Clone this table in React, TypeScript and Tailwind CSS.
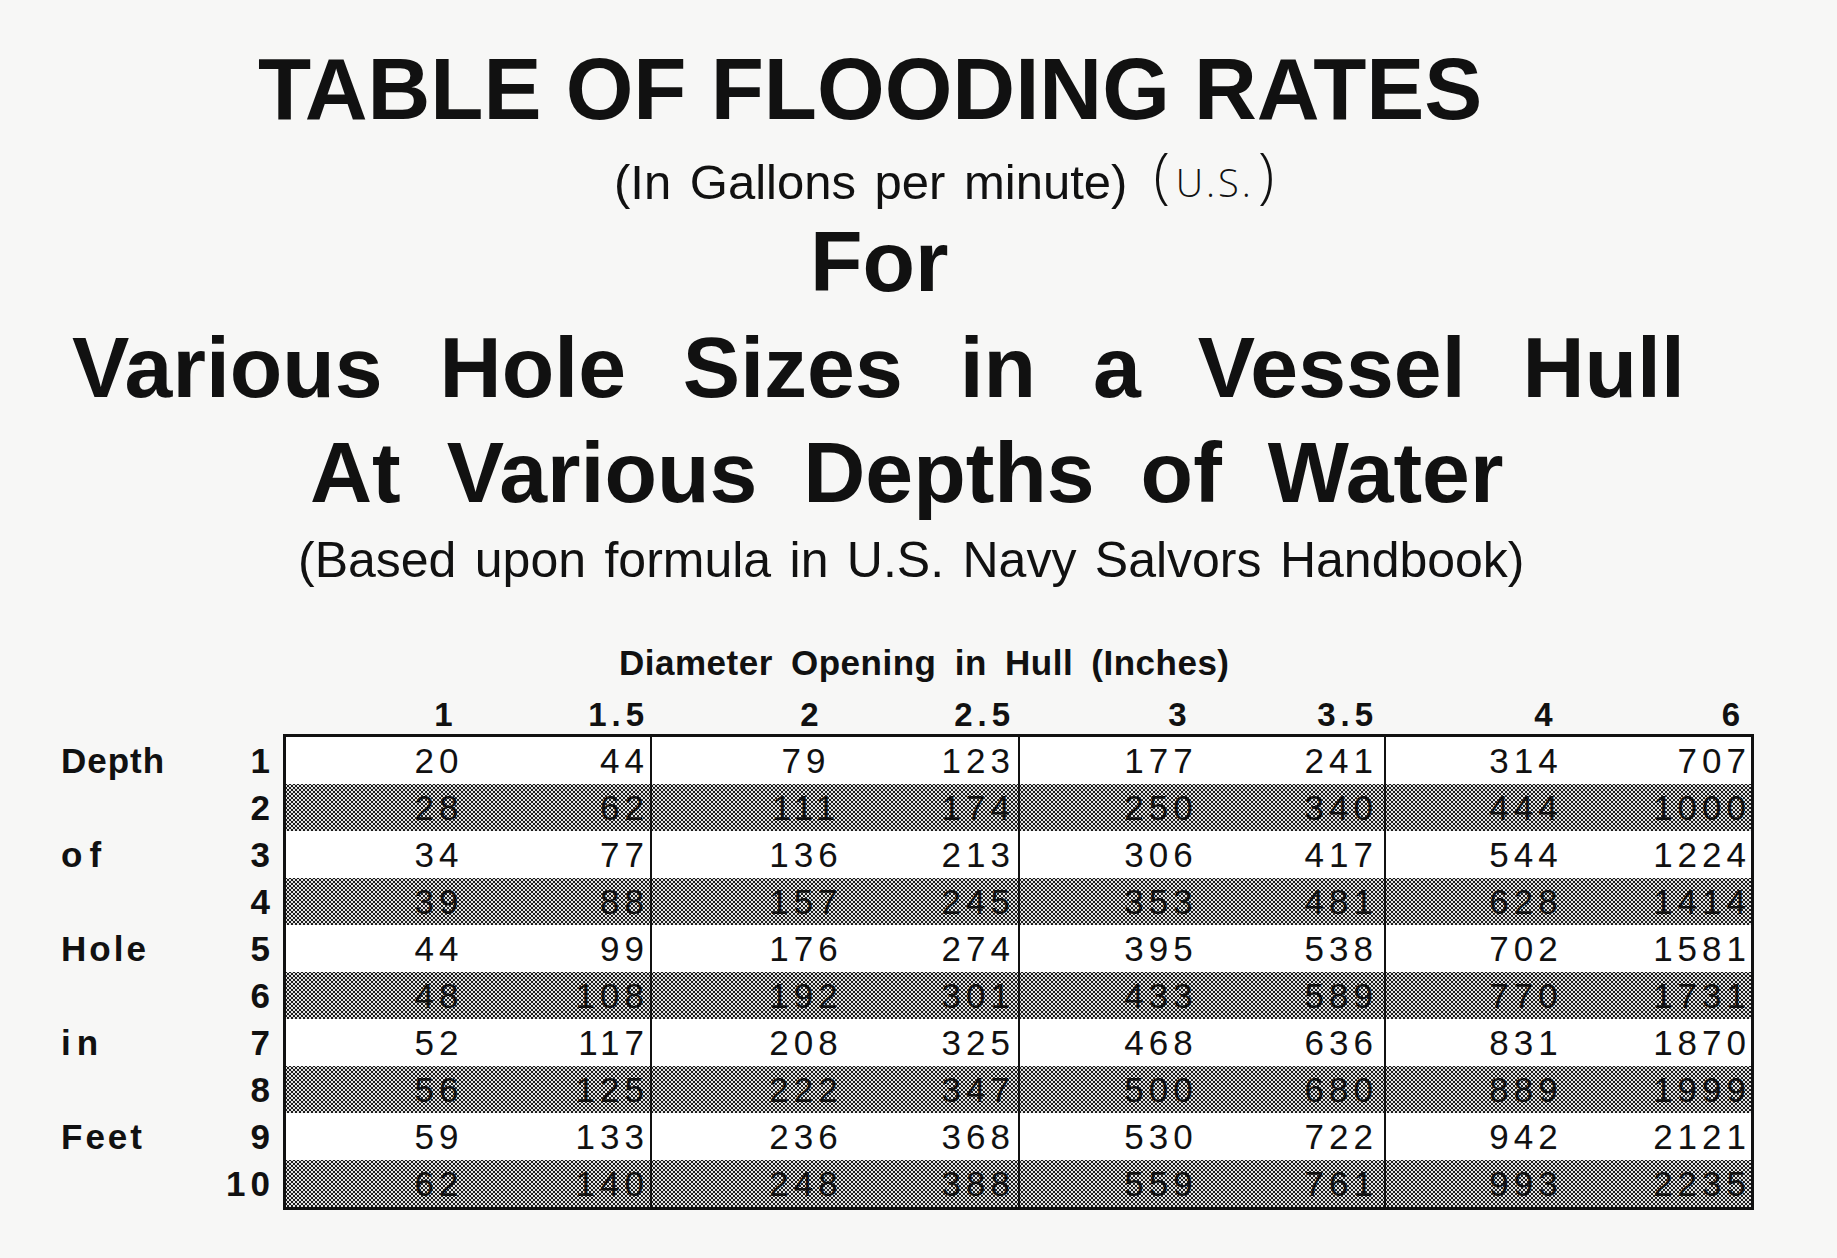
import React from "react";

const rows: number[][] = [
  [20, 44, 79, 123, 177, 241, 314, 707],
  [28, 62, 111, 174, 250, 340, 444, 1000],
  [34, 77, 136, 213, 306, 417, 544, 1224],
  [39, 88, 157, 245, 353, 481, 628, 1414],
  [44, 99, 176, 274, 395, 538, 702, 1581],
  [48, 108, 192, 301, 433, 589, 770, 1731],
  [52, 117, 208, 325, 468, 636, 831, 1870],
  [56, 125, 222, 347, 500, 680, 889, 1999],
  [59, 133, 236, 368, 530, 722, 942, 2121],
  [62, 140, 248, 388, 559, 761, 993, 2235],
];

const labels = ["Depth", "", "of", "", "Hole", "", "in", "", "Feet", ""];
const labelTracking = [
  "tracking-[1px]",
  "",
  "tracking-[7px]",
  "",
  "tracking-[3px]",
  "",
  "tracking-[6px]",
  "",
  "tracking-[3px]",
  "",
];

const headers = [
  ["1", "1.5"],
  ["2", "2.5"],
  ["3", "3.5"],
  ["4", "6"],
];

const headerGroupCls = [
  "flex border-r-2 border-transparent",
  "flex border-r-2 border-transparent",
  "flex border-r-2 border-transparent",
  "flex",
];
const headerRightPad = ["pr-[1px]", "pr-[3px]", "pr-[6px]", "pr-[6px]"];

const groupCls = [
  "flex border-r-2 border-[#111]",
  "flex border-r-2 border-[#111]",
  "flex border-r-2 border-[#111]",
  "flex",
];
const leftMl = ["ml-[103px]", "ml-[104px]", "ml-[91px]", "ml-[90px]"];
const rightPr = ["pr-[1px]", "pr-[3px]", "pr-[6px]", "pr-[0px]"];

const shaded =
  "bg-[#e2e2e2] bg-[radial-gradient(circle,#1c1c1c_0.75px,transparent_1.15px),radial-gradient(circle,#1c1c1c_0.75px,transparent_1.15px)] bg-[length:4px_4px] bg-[position:0_0,2px_2px]";

export default function App() {
  return (
    <div className="w-[1837px] h-[1258px] overflow-hidden bg-[#f7f7f6] text-[#111] font-['Liberation_Sans',Arial,sans-serif]">
      <div className="pt-[45px] pl-[258px] text-[87px] font-bold leading-none whitespace-nowrap">
        TABLE OF FLOODING RATES
      </div>
      <div className="mt-[26px] pl-[614px] text-[49px] leading-none [word-spacing:5px] whitespace-nowrap">
        (In Gallons per minute)
        <span className="ml-[26px] font-['Open_Sans',sans-serif] font-light text-[60px] leading-[0] align-[2px] [word-spacing:0px]">
          (<span className="text-[38px] tracking-[3px] pl-[6px] pr-[4px]">U.S.</span>)
        </span>
      </div>
      <div className="mt-[11px] pl-[810px] text-[86px] font-bold leading-none">
        For
      </div>
      <div className="mt-[20px] pl-[72px] text-[86px] font-bold leading-none [word-spacing:33px] whitespace-nowrap">
        Various Hole Sizes in a Vessel Hull
      </div>
      <div className="mt-[19px] pl-[310px] text-[86px] font-bold leading-none [word-spacing:22px] whitespace-nowrap">
        At Various Depths of Water
      </div>
      <div className="mt-[20px] pl-[298px] text-[50px] leading-none [word-spacing:4.5px] whitespace-nowrap">
        (Based upon formula in U.S. Navy Salvors Handbook)
      </div>
      <div className="mt-[60px] pl-[619px] text-[35px] font-bold leading-none tracking-[0.5px] [word-spacing:8px] whitespace-nowrap">
        Diameter Opening in Hull (Inches)
      </div>

      <div className="mt-[18px] ml-[286px] w-[1465px] grid grid-cols-[366px_368px_366px_365px] text-[33px] font-bold leading-none tracking-[5px]">
        {headers.map((h, g) => (
          <div key={g} className={headerGroupCls[g]}>
            <div className="ml-[110px] w-[100px] text-center">{h[0]}</div>
            <div className={"ml-auto " + headerRightPad[g]}>{h[1]}</div>
          </div>
        ))}
      </div>

      <div className="mt-[3px] flex">
        <div className="w-[283px] pt-[3px] text-[35px] font-bold">
          {labels.map((l, i) => (
            <div key={i} className="h-[47px] leading-[47px] flex">
              <div className={"pl-[61px] " + labelTracking[i]}>{l}</div>
              <div className="ml-auto pr-[8px] tracking-[5px]">{i + 1}</div>
            </div>
          ))}
        </div>
        <div className="w-[1471px] border-[3px] border-[#111] text-[35px] tracking-[5px]">
          {rows.map((r, i) => (
            <div
              key={i}
              className={
                "h-[47px] leading-[47px] grid grid-cols-[366px_368px_366px_1fr] " +
                (i % 2 === 1 ? shaded : "bg-white")
              }
            >
              {[0, 1, 2, 3].map((g) => (
                <div key={g} className={groupCls[g]}>
                  <div className={leftMl[g] + " w-[100px] text-center"}>
                    {r[g * 2]}
                  </div>
                  <div className={"ml-auto " + rightPr[g]}>{r[g * 2 + 1]}</div>
                </div>
              ))}
            </div>
          ))}
        </div>
      </div>
    </div>
  );
}
